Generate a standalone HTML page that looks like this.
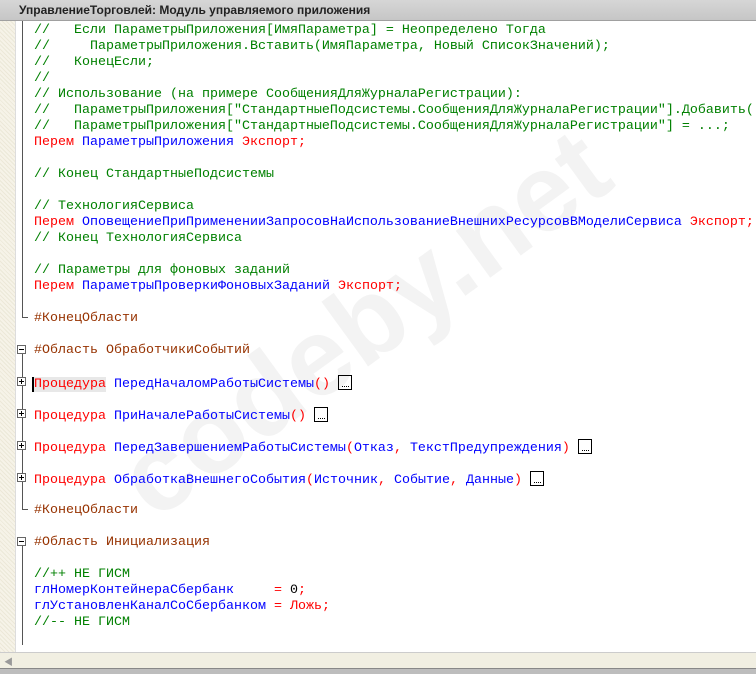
<!DOCTYPE html>
<html><head><meta charset="utf-8"><style>
body{margin:0;width:756px;height:673px;overflow:hidden;background:#fff;position:relative;font-family:"Liberation Mono","Noto Sans CJK SC",monospace;}
#title{position:absolute;left:0;top:0;width:756px;height:20px;background:linear-gradient(#d6d6d6,#c6c6c6);border-bottom:1px solid #a0a0a0;font:bold 12px "Liberation Sans","Noto Sans CJK SC",sans-serif;color:#222;line-height:20px;}
#title span{position:absolute;left:19px;top:0}
#gut{position:absolute;left:0;top:21px;width:15px;height:631px;background:repeating-linear-gradient(45deg,#ece8d8 0 1px,#f6f3e8 1px 3px);border-right:1px solid #ddd}
.l{position:absolute;left:34px;font-size:13.33px;line-height:16px;white-space:pre;height:16px}
.c{color:#008000}.k{color:#ff0000}.i{color:#0000ff}.p{color:#963200}.b{color:#000}
.vl{position:absolute;left:22px;width:1px;background:#555}
.hl{position:absolute;left:22px;height:1px;width:6px;background:#555}
.bx{position:absolute;left:17px;width:9px;height:9px;border:1px solid #666;background:#fff;box-sizing:border-box}
.bx:before{content:"";position:absolute;left:1px;top:3px;width:5px;height:1px;background:#000}
.pl:after{content:"";position:absolute;left:3px;top:1px;width:1px;height:5px;background:#000}
.dots{display:inline-block;width:14px;height:15px;border:1px solid #000;box-sizing:border-box;vertical-align:-3px;position:relative;margin-left:0}
.dots:after{content:"";position:absolute;left:3px;top:10px;width:7px;height:1px;border-top:1px dotted #000}
#wm{position:absolute;left:95px;top:440px;font:bold 110px "Liberation Sans",sans-serif;color:#f3f3f3;transform:rotate(-36deg);transform-origin:left top;white-space:nowrap}
#sb{position:absolute;left:0;top:652px;width:756px;height:16px;background:#f1efe2;border-top:1px solid #ccc;}
#bot{position:absolute;left:0;top:668px;width:756px;height:5px;background:#bdbdbd;border-top:1px solid #888}
</style></head><body>
<div id="wm">codeby.net</div>
<div id="title"><span>УправлениеТорговлей: Модуль управляемого приложения</span></div>
<div id="gut"></div>
<div class="vl" style="top:21px;height:296px"></div><div class="hl" style="top:317px"></div>
<div class="vl" style="top:349px;height:160px"></div><div class="hl" style="top:509px"></div>
<div class="vl" style="top:541px;height:104px"></div>
<div class="bx" style="top:345px"></div>
<div class="bx pl" style="top:377px"></div>
<div class="bx pl" style="top:409px"></div>
<div class="bx pl" style="top:441px"></div>
<div class="bx pl" style="top:473px"></div>
<div class="bx" style="top:537px"></div>
<div class="l c" style="top:23px">//   Если ПараметрыПриложения[ИмяПараметра] = Неопределено Тогда</div>
<div class="l c" style="top:39px">//     ПараметрыПриложения.Вставить(ИмяПараметра, Новый СписокЗначений);</div>
<div class="l c" style="top:55px">//   КонецЕсли;</div>
<div class="l c" style="top:71px">//</div>
<div class="l c" style="top:87px">// Использование (на примере СообщенияДляЖурналаРегистрации):</div>
<div class="l c" style="top:103px">//   ПараметрыПриложения["СтандартныеПодсистемы.СообщенияДляЖурналаРегистрации"].Добавить(...</div>
<div class="l c" style="top:119px">//   ПараметрыПриложения["СтандартныеПодсистемы.СообщенияДляЖурналаРегистрации"] = ...;</div>
<div class="l" style="top:135px"><span class="k">Перем </span><span class="i">ПараметрыПриложения</span><span class="k"> Экспорт;</span></div>
<div class="l c" style="top:167px">// Конец СтандартныеПодсистемы</div>
<div class="l c" style="top:199px">// ТехнологияСервиса</div>
<div class="l" style="top:215px"><span class="k">Перем </span><span class="i">ОповещениеПриПримененииЗапросовНаИспользованиеВнешнихРесурсовВМоделиСервиса</span><span class="k"> Экспорт;</span></div>
<div class="l c" style="top:231px">// Конец ТехнологияСервиса</div>
<div class="l c" style="top:263px">// Параметры для фоновых заданий</div>
<div class="l" style="top:279px"><span class="k">Перем </span><span class="i">ПараметрыПроверкиФоновыхЗаданий</span><span class="k"> Экспорт;</span></div>
<div class="l p" style="top:311px">#КонецОбласти</div>
<div class="l p" style="top:343px">#Область ОбработчикиСобытий</div>
<div class="l" style="top:375px"><span class="k" style="background:#e8e8e8;border-left:2px solid #000;margin-left:-2px">Процедура</span> <span class="i">ПередНачаломРаботыСистемы</span><span class="k">()</span> <span class="dots"></span></div>
<div class="l" style="top:407px"><span class="k">Процедура</span> <span class="i">ПриНачалеРаботыСистемы</span><span class="k">()</span> <span class="dots"></span></div>
<div class="l" style="top:439px"><span class="k">Процедура</span> <span class="i">ПередЗавершениемРаботыСистемы</span><span class="k">(</span><span class="i">Отказ</span><span class="k">,</span> <span class="i">ТекстПредупреждения</span><span class="k">)</span> <span class="dots"></span></div>
<div class="l" style="top:471px"><span class="k">Процедура</span> <span class="i">ОбработкаВнешнегоСобытия</span><span class="k">(</span><span class="i">Источник</span><span class="k">,</span> <span class="i">Событие</span><span class="k">,</span> <span class="i">Данные</span><span class="k">)</span> <span class="dots"></span></div>
<div class="l p" style="top:503px">#КонецОбласти</div>
<div class="l p" style="top:535px">#Область Инициализация</div>
<div class="l c" style="top:567px">//++ НЕ ГИСМ</div>
<div class="l" style="top:583px"><span class="i">глНомерКонтейнераСбербанк</span>     <span class="k">=</span> <span class="b">0</span><span class="k">;</span></div>
<div class="l" style="top:599px"><span class="i">глУстановленКаналСоСбербанком</span> <span class="k">=</span> <span class="k">Ложь;</span></div>
<div class="l c" style="top:615px">//-- НЕ ГИСМ</div>
<div id="sb"><span style="position:absolute;left:4px;top:2px;font-size:9px;color:#999">◀</span></div>
<div id="bot"></div>
</body></html>
